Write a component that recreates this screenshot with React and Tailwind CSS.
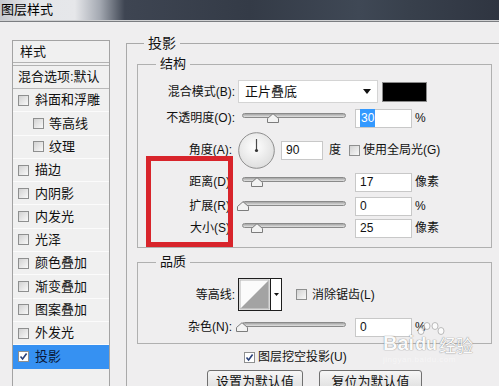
import React from "react";

function Check({ checked, white }) {
  return (
    <span
      className={
        "w-[11px] h-[11px] shrink-0 border border-[#8e8f8f] flex items-center justify-center " +
        (white ? "bg-white" : "bg-gradient-to-br from-[#d2d2d2] to-[#f9f9f9]")
      }
    >
      {checked && (
        <svg width="9" height="9" viewBox="0 0 9 9">
          <path d="M1.5 4.5 L3.6 7 L7.6 1.5" fill="none" stroke="#28407a" strokeWidth="1.6" />
        </svg>
      )}
    </span>
  );
}

function Label({ children, pr = "" }) {
  return <div className={"w-[97px] shrink-0 text-right text-[12px] text-[#111] " + pr}>{children}</div>;
}

function Slider({ pos }) {
  return (
    <div className="relative ml-[7px] w-[104px] h-[20px] shrink-0">
      <div className="mt-[5px] h-[5px] rounded-full border border-[#8a8a8a] bg-gradient-to-b from-[#a4a4a4] to-[#e2e2e2]" />
      <svg className="absolute top-[5px]" style={{ left: pos - 6 }} width="12" height="10" viewBox="0 0 12 10">
        <path d="M0.5 9.5 V5.5 L6 0.7 L11.5 5.5 V9.5 Z" fill="#f3f3f3" stroke="#7c7c7c" />
      </svg>
    </div>
  );
}

function Field({ children, w = "w-[57px]", ml = "ml-[9px]" }) {
  return (
    <div className={ml + " " + w + " h-[19px] shrink-0 bg-white border border-[#c8c8c8] flex items-center pl-[4px] text-[12px] text-[#111]"}>
      {children}
    </div>
  );
}

function Unit({ children }) {
  return <div className="ml-[3px] text-[12px] text-[#111]">{children}</div>;
}

const listItems = [
  { t: "斜面和浮雕" },
  { t: "等高线", indent: true },
  { t: "纹理", indent: true },
  { t: "描边" },
  { t: "内阴影" },
  { t: "内发光" },
  { t: "光泽" },
  { t: "颜色叠加" },
  { t: "渐变叠加" },
  { t: "图案叠加" },
  { t: "外发光" },
  { t: "投影", active: true },
];

export default function App() {
  return (
    <div className="relative w-[499px] h-[386px] overflow-hidden bg-[#efeeef] font-['Liberation_Sans','Noto_Sans_CJK_SC',sans-serif] text-[#111]">
      {/* title bar */}
      <div className="h-[20px] flex items-center pl-[1px] text-[13px] text-black bg-[linear-gradient(90deg,#c6c9cf_0%,#e4e6e9_6%,#e6e7ea_15%,#a4a9b2_20%,#3e4552_25%,#343b47_50%,#3f4855_72%,#38404c_82%,#2f3541_100%)]">
        图层样式
      </div>
      <div className="h-[1px] bg-[#cfd0d2]" />
      <div className="h-[1px] bg-[#7b7d81]" />

      <div className="flex items-start pl-[12px] pt-[11px]">
        {/* left list */}
        <div className="mt-[7px] w-[98px] h-[360px] shrink-0 border border-[#a3a3a3] bg-[#f0f0f0] text-[13px]">
          <div className="h-[21px] flex items-center pl-[7px]">样式</div>
          <div className="h-[4px] border-y border-[#b2b2b2]" />
          <div className="h-[23px] flex items-center pl-[5px] border-b border-[#b8b8b8] whitespace-nowrap">混合选项:默认</div>
          {listItems.map((it) => (
            <div
              key={it.t}
              className={
                "h-[23.3px] flex items-center border-b " +
                (it.indent ? "pl-[20px] " : "pl-[5px] ") +
                (it.active ? "bg-[#3691f2] border-[#3691f2] text-[#0a1838]" : "border-[#fbfbfb]")
              }
            >
              <Check checked={it.active} white={it.active} />
              <span className={it.indent ? "ml-[5px]" : "ml-[6px]"}>{it.t}</span>
            </div>
          ))}
        </div>

        {/* 投影 */}
        <fieldset className="ml-[16px] w-[400px] h-[400px] shrink-0 border border-[#a9a9a9]">
          <legend className="ml-[17px] px-[4px] text-[14px] leading-[20px]">投影</legend>
          <div className="pl-[10px]">
            <fieldset className="mt-[2px] w-[355px] border border-[#b0b0b0] pb-[9px]">
              <legend className="ml-[18px] px-[4px] text-[13px] leading-[18px]">结构</legend>

              <div className="flex items-center h-[23px] mt-[7px]">
                <Label>混合模式(B):</Label>
                <div className="ml-[3px] w-[140px] h-[23px] shrink-0 bg-white border border-[#d4d4d4] flex items-center pl-[6px] text-[13px]">
                  正片叠底
                  <svg className="ml-auto mr-[6px]" width="8" height="5" viewBox="0 0 8 5">
                    <path d="M0 0 H8 L4 5 Z" fill="#111" />
                  </svg>
                </div>
                <div className="ml-[4px] w-[45px] h-[20px] shrink-0 bg-black border border-[#8a8a8a]" />
              </div>

              <div className="flex items-center h-[20px] mt-[5px]">
                <Label>不透明度(O):</Label>
                <Slider pos={31} />
                <Field>
                  <span className="bg-[#3399ff] text-white px-[1px]">30</span>
                </Field>
                <Unit>%</Unit>
              </div>

              <div className="flex items-center h-[36px] mt-[4px]">
                <Label pr="pr-[3px]">角度(A):</Label>
                <svg className="ml-[3px] shrink-0" width="37" height="37" viewBox="0 0 37 37">
                  <defs>
                    <radialGradient id="dial" cx="45%" cy="40%" r="65%">
                      <stop offset="0%" stopColor="#ffffff" />
                      <stop offset="100%" stopColor="#dcdcdc" />
                    </radialGradient>
                  </defs>
                  <circle cx="18.5" cy="18.5" r="17.8" fill="url(#dial)" stroke="#8e8e8e" />
                  <line x1="18.5" y1="18.5" x2="18.5" y2="7" stroke="#4a4a4a" strokeWidth="1.2" />
                  <circle cx="18.5" cy="18.5" r="1.6" fill="#333" />
                </svg>
                <Field w="w-[42px]" ml="ml-[6px]">90</Field>
                <div className="ml-[6px] text-[12px]">度</div>
                <div className="ml-[8px]">
                  <Check />
                </div>
                <div className="ml-[3px] text-[12px] whitespace-nowrap">使用全局光(G)</div>
              </div>

              <div className="flex items-center h-[20px] mt-[4px]">
                <Label pr="pr-[5px]">距离(D)</Label>
                <Slider pos={15} />
                <Field>17</Field>
                <Unit>像素</Unit>
              </div>

              <div className="flex items-center h-[20px] mt-[4px]">
                <Label pr="pr-[5px]">扩展(R)</Label>
                <Slider pos={1} />
                <Field>0</Field>
                <Unit>%</Unit>
              </div>

              <div className="flex items-center h-[20px] mt-[2px]">
                <Label pr="pr-[5px]">大小(S)</Label>
                <Slider pos={15} />
                <Field>25</Field>
                <Unit>像素</Unit>
              </div>
            </fieldset>

            <fieldset className="mt-[5px] w-[355px] border border-[#b0b0b0] pb-[6px]">
              <legend className="ml-[18px] px-[4px] text-[13px] leading-[18px]">品质</legend>

              <div className="flex items-center h-[33px] mt-[7px]">
                <Label>等高线:</Label>
                <div className="ml-[3px] w-[44px] h-[33px] shrink-0 border border-[#1e1e1e] bg-white flex">
                  <svg width="31" height="31" viewBox="0 0 31 31" className="shrink-0">
                    <rect x="1" y="1" width="29" height="29" fill="#fbfbfb" stroke="#b4b4b4" />
                    <path d="M1.5 29.5 L29.5 1.5 V29.5 Z" fill="#a3a3a3" />
                  </svg>
                  <div className="flex-1 border-l border-[#1e1e1e] flex items-center justify-center">
                    <svg width="5" height="3" viewBox="0 0 5 3">
                      <path d="M0 0 H5 L2.5 3 Z" fill="#111" />
                    </svg>
                  </div>
                </div>
                <div className="ml-[14px]">
                  <Check />
                </div>
                <div className="ml-[5px] text-[12px] whitespace-nowrap">消除锯齿(L)</div>
              </div>

              <div className="flex items-center h-[20px] mt-[6px]">
                <Label pr="pr-[3px]">杂色(N):</Label>
                <Slider pos={0} />
                <Field>0</Field>
                <Unit>%</Unit>
              </div>
            </fieldset>

            <div className="flex items-center h-[20px] mt-[3px] pl-[107px]">
              <Check checked white />
              <span className="ml-[3px] text-[12px] whitespace-nowrap">图层挖空投影(U)</span>
            </div>

            <div className="flex mt-[3px] pl-[70px]">
              <div className="w-[96px] h-[24px] shrink-0 rounded-[3px] border border-[#707070] bg-gradient-to-b from-[#f6f6f6] to-[#dadada] flex items-center justify-center text-[13px]">
                设置为默认值
              </div>
              <div className="ml-[16px] w-[103px] h-[24px] shrink-0 rounded-[3px] border border-[#707070] bg-gradient-to-b from-[#f6f6f6] to-[#dadada] flex items-center justify-center text-[13px]">
                复位为默认值
              </div>
            </div>
          </div>
        </fieldset>
      </div>

      {/* annotation box */}
      <div className="absolute left-[146px] top-[156px] w-[87px] h-[91px] border-[5px] border-[#d8242b]" />

      {/* watermark */}
      <div className="absolute left-[383px] top-[333px] flex flex-col items-start opacity-80 pointer-events-none">
        <div className="flex items-end text-white [text-shadow:0_0_1px_#7a7a7a,0_0_1px_#7a7a7a]">
          <span className="text-[20px] font-bold leading-none">Bai</span>
          <span className="relative text-[18px] font-bold leading-none ml-[1px]">
            <svg className="absolute left-[2px] -top-[13px]" width="28" height="14" viewBox="0 0 28 14">
              <g fill="#ffffff" stroke="#9a9a9a" strokeWidth="0.8">
                <ellipse cx="4" cy="9" rx="3" ry="3.5" />
                <ellipse cx="10" cy="4" rx="3" ry="3.5" />
                <ellipse cx="18" cy="4" rx="3" ry="3.5" />
                <ellipse cx="24" cy="9" rx="3" ry="3.5" />
              </g>
            </svg>
            du
          </span>
          <span className="text-[17px] leading-none ml-[2px] font-['Noto_Sans_CJK_SC',sans-serif]">经验</span>
        </div>
        <div className="mt-[3px] text-[8px] text-white opacity-60 leading-none tracking-[0.5px]">jingyan.baidu.com</div>
      </div>
    </div>
  );
}
